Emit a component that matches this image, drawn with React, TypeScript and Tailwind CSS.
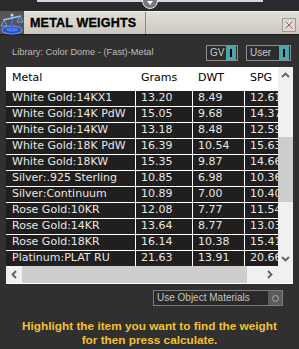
import { Fragment } from "react";

const rows: [string, string, string, string][] = [
  ["White Gold:14KX1", "13.20", "8.49", "12.61"],
  ["White Gold:14K PdW", "15.05", "9.68", "14.37"],
  ["White Gold:14KW", "13.18", "8.48", "12.59"],
  ["White Gold:18K PdW", "16.39", "10.54", "15.63"],
  ["White Gold:18KW", "15.35", "9.87", "14.66"],
  ["Silver:.925 Sterling", "10.85", "6.98", "10.36"],
  ["Silver:Continuum", "10.89", "7.00", "10.40"],
  ["Rose Gold:10KR", "12.08", "7.77", "11.54"],
  ["Rose Gold:14KR", "13.64", "8.77", "13.03"],
  ["Rose Gold:18KR", "16.14", "10.38", "15.41"],
  ["Platinum:PLAT RU", "21.63", "13.91", "20.66"],
];

function ScaleIcon() {
  return (
    <svg width="24" height="24" viewBox="0 0 24 24">
      <ellipse cx="12" cy="19" rx="10" ry="4" fill="#2450c8" stroke="#8fb4ff" strokeWidth="0.8" />
      <ellipse cx="12" cy="18.5" rx="6" ry="2" fill="#4a7cf0" />
      <rect x="11" y="4" width="2" height="15" fill="#3a66e0" />
      <line x1="3" y1="9" x2="21" y2="5" stroke="#9cc0ff" strokeWidth="1.6" />
      <path d="M4 9 L1 15 L7 15 Z" fill="none" stroke="#6f9cff" strokeWidth="1" />
      <path d="M20 5 L17 11 L23 11 Z" fill="none" stroke="#6f9cff" strokeWidth="1" />
      <circle cx="12" cy="4" r="1.5" fill="#bcd4ff" />
    </svg>
  );
}

function Chevron({ dir }: { dir: "up" | "down" | "left" | "right" }) {
  const d = {
    up: "M2 7 L5.5 3.5 L9 7",
    down: "M2 4 L5.5 7.5 L9 4",
    left: "M7 2 L3.5 5.5 L7 9",
    right: "M4 2 L7.5 5.5 L4 9",
  }[dir];
  return (
    <svg width="11" height="11" viewBox="0 0 11 11">
      <path d={d} fill="none" stroke="#606060" strokeWidth="1.8" />
    </svg>
  );
}

function Toggle({ label, w }: { label: string; w: string }) {
  return (
    <div className={`flex items-center h-[16px] border border-[#8c8c8c] bg-[#2c2c2c] ${w}`}>
      <span className="flex-1 pl-[3px] text-[10px] text-[#c8c8c8] leading-none">{label}</span>
      <span className="w-[10px] h-[14px] bg-[#4aa6ae] flex items-center justify-center mr-px">
        <span className="w-[2px] h-[8px] bg-black" />
      </span>
    </div>
  );
}

export default function App() {
  return (
    <div className="w-[299px] h-[349px] overflow-hidden bg-[#303030] font-['Liberation_Sans',Arial,sans-serif]">
      {/* top strip */}
      <div className="relative h-[11px] bg-[#2a2a2a]">
        <div className="absolute left-[37px] top-0 w-[226px] h-[2px] bg-[#d8d8d8]" />
        <div className="absolute left-[142px] top-[-7px] w-[16px] h-[16px] rounded-full bg-[#777] border border-[#eee] flex items-end justify-center pb-[3px]">
          <span className="w-0 h-0 border-x-[3px] border-x-transparent border-t-[4px] border-t-white" />
        </div>
      </div>

      {/* title bar */}
      <div className="flex h-[24px] border-b border-[#1c1c1c]">
        <div className="w-[24px] bg-[#555] flex items-center justify-center">
          <ScaleIcon />
        </div>
        <div className="flex-1 flex items-center bg-gradient-to-b from-[#e2dfd8] to-[#cbc8c0] border-t border-[#f2f0ea]">
          <div className="w-[122px] h-full flex items-center pl-[6px] border-r border-[#8e8b84] text-[12.5px] font-bold text-black tracking-[0.2px] [-webkit-text-stroke:0.35px_black]">
            METAL WEIGHTS
          </div>
          <div className="flex-1" />
          <div className="w-[14px] h-[14px] mr-[3px] mt-[4px] border border-[#9a9a9a] bg-[#dcd9d2] flex items-center justify-center">
            <svg width="10" height="10" viewBox="0 0 10 10">
              <path d="M1.5 1.5 L8.5 8.5 M8.5 1.5 L1.5 8.5" stroke="#c0504d" strokeWidth="1" />
            </svg>
          </div>
        </div>
      </div>

      {/* library row */}
      <div className="flex items-center h-[19px] mt-[8px] pl-[12px] pr-[8px]">
        <span className="flex-1 text-[9.3px] text-[#bcbcbc]">Library: Color Dome - (Fast)-Metal</span>
        <Toggle label="GV" w="w-[32px]" />
        <div className="w-[8px]" />
        <Toggle label="User" w="w-[45px]" />
      </div>

      {/* table */}
      <div className="mx-[6px] mt-[5px] w-[287px] h-[217px] bg-white flex flex-col font-['DejaVu_Sans',Verdana,sans-serif]">
        <div className="flex">
          <div className="w-[272px]">
            <div className="grid grid-cols-[129px_56px_51px_33px] gap-px bg-white text-[11px]">
              <div className="h-[23px] flex items-center pl-[6px] text-black">Metal</div>
              <div className="h-[23px] flex items-center pl-[5px] text-black">Grams</div>
              <div className="h-[23px] flex items-center pl-[5px] text-black">DWT</div>
              <div className="h-[23px] flex items-center pl-[5px] text-black">SPG</div>
              {rows.map((r) => (
                <Fragment key={r[0]}>
                  <div className="h-[15px] flex items-center pl-[6px] bg-[#211e1e] text-[#e6e6e6] whitespace-nowrap overflow-hidden">{r[0]}</div>
                  <div className="h-[15px] flex items-center pl-[5px] bg-[#211e1e] text-[#e6e6e6]">{r[1]}</div>
                  <div className="h-[15px] flex items-center pl-[5px] bg-[#211e1e] text-[#e6e6e6]">{r[2]}</div>
                  <div className="h-[15px] flex items-center pl-[5px] bg-[#211e1e] text-[#e6e6e6] whitespace-nowrap overflow-hidden">{r[3]}</div>
                </Fragment>
              ))}
            </div>
          </div>
          {/* vertical scrollbar */}
          <div className="w-[15px] h-[199px] bg-[#f0f0f0] flex flex-col items-center">
            <div className="h-[16px] flex items-center"><Chevron dir="up" /></div>
            <div className="h-[54px]" />
            <div className="w-full h-[65px] bg-[#cdcdcd]" />
            <div className="flex-1" />
            <div className="h-[16px] flex items-center"><Chevron dir="down" /></div>
          </div>
        </div>
        {/* horizontal scrollbar */}
        <div className="flex h-[17px]">
          <div className="w-[272px] bg-[#f0f0f0] flex items-center">
            <div className="w-[16px] flex justify-center"><Chevron dir="left" /></div>
            <div className="w-[225px] h-full bg-[#cdcdcd]" />
            <div className="flex-1 flex justify-end pr-[3px]"><Chevron dir="right" /></div>
          </div>
          <div className="flex-1 bg-[#f0f0f0]" />
        </div>
      </div>

      {/* use object materials */}
      <div className="flex justify-end pr-[16px] mt-[6px]">
        <div className="w-[130px] h-[16px] border border-[#7c7c7c] bg-[#2a2a2a] flex items-center">
          <span className="flex-1 pl-[3px] text-[10px] text-[#c4c4c4] leading-none">Use Object Materials</span>
          <span className="w-[14px] h-[14px] bg-[#5c5c5c] flex items-center justify-center">
            <span className="w-[7px] h-[7px] rounded-full border border-[#a8a8a8]" />
          </span>
        </div>
      </div>

      <div className="mt-[13px] text-center text-[11.8px] leading-[14px] font-bold text-[#f2c230]">
        Highlight the item you want to find the weight
        <br />
        for then press calculate.
      </div>
    </div>
  );
}
